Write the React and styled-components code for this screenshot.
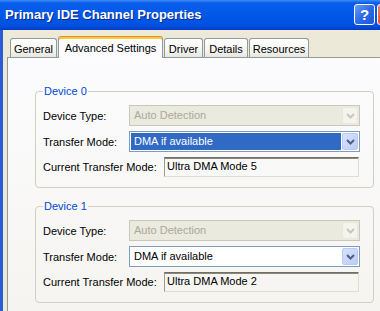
import React from 'react'
import styled, { createGlobalStyle } from 'styled-components'

const GlobalStyle = createGlobalStyle`
  html, body {
    margin: 0;
    padding: 0;
    overflow: hidden;
    background: #ECE9D8;
  }
  body {
    font-family: "Liberation Sans", Arial, sans-serif;
    font-size: 11px;
    color: #000;
  }
`

const tabs = [
  { label: 'General', width: 47 },
  { label: 'Advanced Settings', width: 105, active: true },
  { label: 'Driver', width: 39 },
  { label: 'Details', width: 44 },
  { label: 'Resources', width: 60 },
]

const devices = [
  { name: 'Device 0', mode: 'Ultra DMA Mode 5', focused: true },
  { name: 'Device 1', mode: 'Ultra DMA Mode 2', focused: false },
]

function Chevron({ color }) {
  return (
    <svg width="9" height="6" viewBox="0 0 9 6">
      <path d="M1 1 L4.5 4.5 L8 1" fill="none" stroke={color} strokeWidth="2" />
    </svg>
  )
}

function Combo({ value, disabled, selected }) {
  return (
    <ComboBox disabled={disabled}>
      <ComboValue disabled={disabled} selected={selected}>{value}</ComboValue>
      <ArrowButton disabled={disabled}>
        <Chevron color={disabled ? '#C9C7BA' : '#4D6185'} />
      </ArrowButton>
    </ComboBox>
  )
}

function DeviceGroup({ name, mode, focused }) {
  return (
    <Group>
      <Legend>{name}</Legend>
      <Row>
        <Label>Device Type:</Label>
        <Combo value="Auto Detection" disabled />
      </Row>
      <Row>
        <Label>Transfer Mode:</Label>
        <Combo value="DMA if available" selected={focused} />
      </Row>
      <Row>
        <Label wide>Current Transfer Mode:</Label>
        <ReadOnly>{mode}</ReadOnly>
      </Row>
    </Group>
  )
}

export default function App() {
  return (
    <>
      <GlobalStyle />
      <Screen>
        <Window>
          <TitleBar>
            <Title>Primary IDE Channel Properties</Title>
            <HelpButton>?</HelpButton>
            <CloseButton />
          </TitleBar>
          <Body>
            <TabStrip>
              {tabs.map(t => (
                <Tab key={t.label} active={t.active} width={t.width}>{t.label}</Tab>
              ))}
            </TabStrip>
            <Panel>
              {devices.map(d => (
                <DeviceGroup key={d.name} {...d} />
              ))}
            </Panel>
          </Body>
        </Window>
      </Screen>
    </>
  )
}

const Screen = styled.div`
  width: 380px;
  height: 311px;
  overflow: hidden;
`

const Window = styled.div`
  width: 401px;
  height: 311px;
  display: flex;
  flex-direction: column;
  background: #ECE9D8;
`

const TitleBar = styled.div`
  flex: none;
  height: 30px;
  box-sizing: border-box;
  display: flex;
  align-items: center;
  gap: 2px;
  padding: 0 3px 1px 5px;
  background: linear-gradient(to bottom, #3D8CF6 0px, #0A5DEB 3px, #0058E8 16px, #0050DE 26px, #003CC6 30px);
`

const Title = styled.div`
  flex: 1;
  color: #fff;
  font-weight: bold;
  font-size: 13px;
  text-shadow: 1px 1px 0 #0A2A8C;
  white-space: nowrap;
`

const HelpButton = styled.div`
  flex: none;
  width: 21px;
  height: 21px;
  box-sizing: border-box;
  border: 1px solid #fff;
  border-radius: 3px;
  background: linear-gradient(135deg, #6A9EFA 0%, #2D6AE8 50%, #1E56D8 100%);
  color: #fff;
  font-weight: bold;
  font-size: 15px;
  line-height: 19px;
  text-align: center;
`

const CloseButton = styled(HelpButton)`
  background: linear-gradient(135deg, #F08A6A 0%, #E0552F 50%, #C8401E 100%);
`

const Body = styled.div`
  flex: 1;
  display: flex;
  flex-direction: column;
  border-left: 3px solid #2A5CD6;
  border-right: 3px solid #2A5CD6;
  padding: 6px 4px 0 4px;
`

const TabStrip = styled.div`
  flex: none;
  height: 21px;
  display: flex;
  align-items: flex-end;
  gap: 1px;
  padding-left: 3px;
`

const Tab = styled.div`
  flex: none;
  position: relative;
  z-index: ${p => (p.active ? 1 : 0)};
  width: ${p => p.width}px;
  height: ${p => (p.active ? 22 : 19)}px;
  margin-bottom: ${p => (p.active ? -1 : 0)}px;
  box-sizing: border-box;
  display: flex;
  align-items: center;
  justify-content: center;
  padding-top: ${p => (p.active ? 0 : 1)}px;
  border: 1px solid #919B9C;
  border-bottom: none;
  border-top-color: ${p => (p.active ? '#E68B2C' : '#919B9C')};
  border-radius: 3px 3px 0 0;
  background: ${p => (p.active ? '#FCFCFE' : 'linear-gradient(#FFFFFF, #F3F3EF 70%, #E6E5DE)')};
  box-shadow: ${p => (p.active ? 'inset 0 2px 0 #FFC83C' : 'none')};
  white-space: nowrap;
`

const Panel = styled.div`
  flex: 1;
  display: flex;
  flex-direction: column;
  gap: 12px;
  border: 1px solid #919B9C;
  border-bottom: none;
  padding: 27px 20px 0 27px;
  background: linear-gradient(#FCFCFE, #F4F3EE 300px);
`

const Group = styled.fieldset`
  margin: 0;
  padding: 7px 13px 10px 7px;
  border: 1px solid #D0D0BF;
  border-radius: 4px;
  display: flex;
  flex-direction: column;
  gap: 5px;
`

const Legend = styled.legend`
  padding: 0 1px;
  font-size: 11px;
  line-height: 13px;
  color: #0046D5;
`

const Row = styled.div`
  display: flex;
  align-items: center;
`

const Label = styled.div`
  flex: none;
  width: ${p => (p.wide ? 121 : 86)}px;
  white-space: nowrap;
`

const ComboBox = styled.div`
  flex: none;
  width: 231px;
  height: 21px;
  box-sizing: border-box;
  display: flex;
  gap: 1px;
  padding: 1px;
  border: 1px solid ${p => (p.disabled ? '#C9C7BA' : '#7F9DB9')};
  background: ${p => (p.disabled ? '#EBEADF' : '#FFFFFF')};
`

const ComboValue = styled.div`
  flex: 1;
  padding-left: 3px;
  line-height: 17px;
  white-space: nowrap;
  background: ${p => (p.selected ? '#316AC5' : 'transparent')};
  color: ${p => (p.disabled ? '#ACA899' : p.selected ? '#FFFFFF' : '#000000')};
`

const ArrowButton = styled.div`
  flex: none;
  width: 16px;
  height: 17px;
  box-sizing: border-box;
  display: flex;
  align-items: center;
  justify-content: center;
  border: 1px solid ${p => (p.disabled ? '#E8E6DD' : '#B9CBF3')};
  border-radius: 2px;
  background: ${p => (p.disabled ? '#F4F3EE' : 'linear-gradient(135deg, #D6E2FC, #BCCDF7)')};
`

const ReadOnly = styled.div`
  flex: none;
  width: 195px;
  height: 20px;
  box-sizing: border-box;
  padding-left: 2px;
  line-height: 17px;
  border: 1px solid;
  border-color: #716F64 #DEDCD3 #DEDCD3 #9D9B90;
  box-shadow: inset 0 1px 0 #8A887D;
  white-space: nowrap;
`
